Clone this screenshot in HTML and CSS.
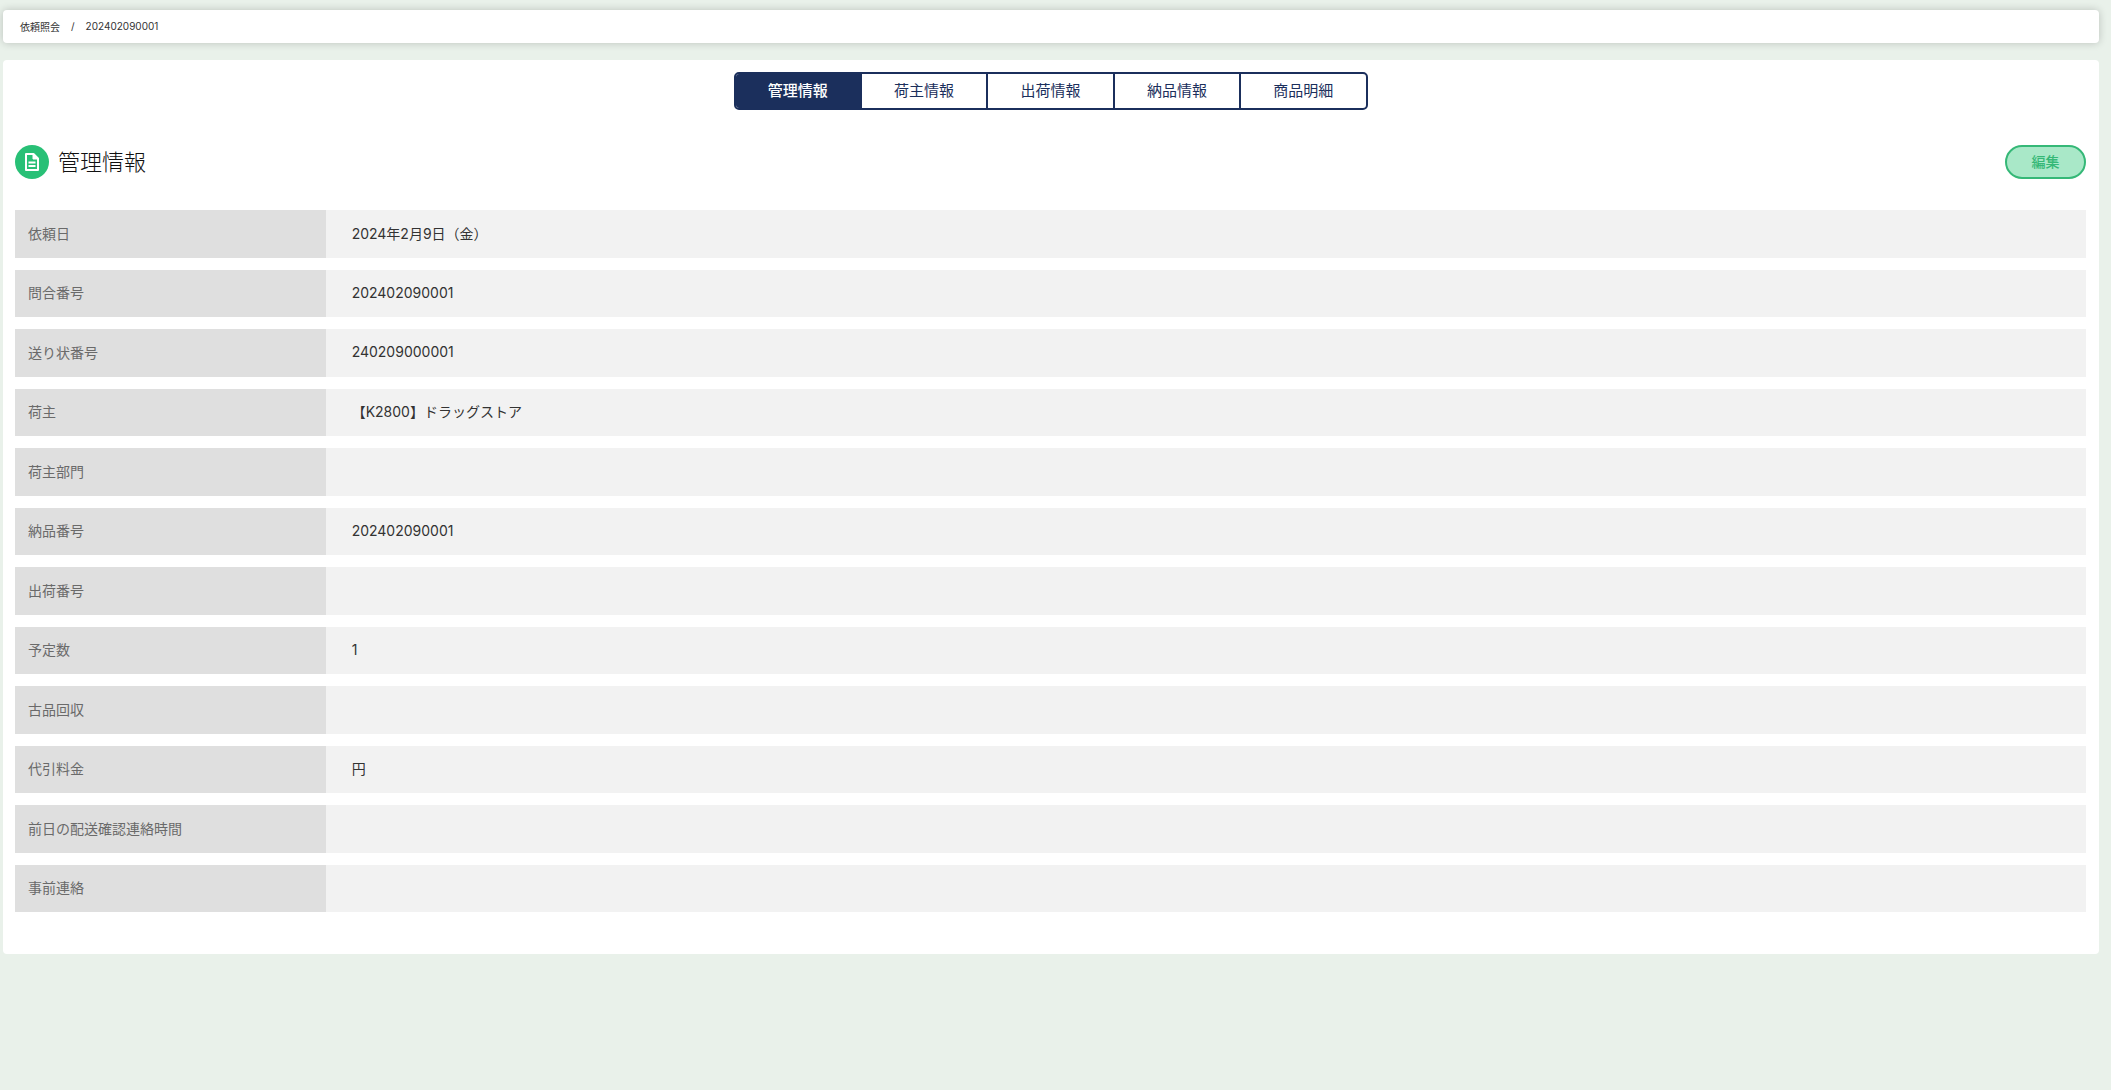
FILE: index.html
```html
<!DOCTYPE html>
<html lang="ja">
  <head>
    <meta charset="utf-8">
    <title>管理情報</title>
    <link rel="stylesheet" href="styles.css">
  </head>
  <body>
    <nav class="breadcrumb">
      <a href="#">依頼照会</a>
      <span>/</span>
      <span>202402090001</span>
    </nav>

    <main class="card">
      <nav class="tabs">
        <a class="active" href="#">管理情報</a>
        <a href="#">荷主情報</a>
        <a href="#">出荷情報</a>
        <a href="#">納品情報</a>
        <a href="#">商品明細</a>
      </nav>

      <div class="section-header">
        <span class="section-icon">
          <svg width="14" height="18" viewBox="0 0 14 18" fill="none" stroke="#fff" stroke-width="2">
            <path d="M1 1h7.5L13 5.5V17H1z" stroke-linejoin="round" />
            <path d="M8 1v5h5z" fill="#fff" stroke-width="1" />
            <path d="M3.5 9.5h7M3.5 13h7" />
          </svg>
        </span>
        <h1>管理情報</h1>
        <button type="button" class="edit-btn">編集</button>
      </div>

      <table class="info">
        <tr><th scope="row">依頼日</th><td>2024年2月9日（金）</td></tr>
        <tr><th scope="row">問合番号</th><td>202402090001</td></tr>
        <tr><th scope="row">送り状番号</th><td>240209000001</td></tr>
        <tr><th scope="row">荷主</th><td>【K2800】ドラッグストア</td></tr>
        <tr><th scope="row">荷主部門</th><td></td></tr>
        <tr><th scope="row">納品番号</th><td>202402090001</td></tr>
        <tr><th scope="row">出荷番号</th><td></td></tr>
        <tr><th scope="row">予定数</th><td>1</td></tr>
        <tr><th scope="row">古品回収</th><td></td></tr>
        <tr><th scope="row">代引料金</th><td>円</td></tr>
        <tr><th scope="row">前日の配送確認連絡時間</th><td></td></tr>
        <tr><th scope="row">事前連絡</th><td></td></tr>
      </table>
    </main>
  </body>
</html>
```

FILE: styles.css
```css
* {
  box-sizing: border-box;
}

body {
  margin: 0;
  padding: 10px 12px 10px 3px;
  background-color: #e9f1ea;
  color: #333;
  font-family: Inter, "Noto Sans CJK JP", sans-serif;
  font-size: 14px;
}

a {
  color: inherit;
  text-decoration: none;
}

.breadcrumb {
  display: flex;
  align-items: center;
  gap: 11px;
  height: 33px;
  padding: 0 17px 1px;
  margin-bottom: 17px;
  background-color: #fff;
  border-radius: 4px;
  box-shadow: 0 0 8px rgba(0, 0, 0, 0.2);
  font-size: 10px;
}

.card {
  padding: 12px 13px 30px 12px;
  background-color: #fff;
  border-radius: 4px;
}

/* Tabs */
.tabs {
  display: flex;
  width: 634px;
  margin: 0 auto 35px;
  border: 2px solid #1b2f5c;
  border-radius: 5px;
  overflow: hidden;
}

.tabs a {
  flex: 1;
  color: #1b2f5c;
  font-size: 15px;
  line-height: 34px;
  text-align: center;
}

.tabs a + a {
  border-left: 2px solid #1b2f5c;
}

.tabs .active {
  background-color: #1b2f5c;
  color: #fff;
  font-weight: 500;
}

/* Section title */
.section-header {
  display: flex;
  align-items: center;
  gap: 9px;
  margin-bottom: 19px;
}

.section-icon {
  display: flex;
  align-items: center;
  justify-content: center;
  width: 34px;
  height: 34px;
  border-radius: 50%;
  background-color: #28c076;
}

h1 {
  margin: 0;
  color: #111;
  font-size: 22px;
  font-weight: 300;
  line-height: 32px;
}

.edit-btn {
  width: 81px;
  height: 34px;
  padding: 0 0 2px;
  margin-left: auto;
  border: 2px solid #35b877;
  border-radius: 17px;
  background-color: #a9e8c8;
  color: #35b877;
  font-family: inherit;
  font-size: 14px;
  font-weight: 500;
  cursor: pointer;
}

/* Info rows */
.info {
  width: 100%;
  height: 726px;
  border-collapse: separate;
  border-spacing: 0 12px;
}

.info th {
  width: 15%;
  padding: 0 13px 2px;
  background-color: #dfdfdf;
  color: #6a6a6a;
  font-weight: normal;
  text-align: left;
}

.info td {
  padding: 0 26px 2px;
  background-color: #f2f2f2;
}
```
